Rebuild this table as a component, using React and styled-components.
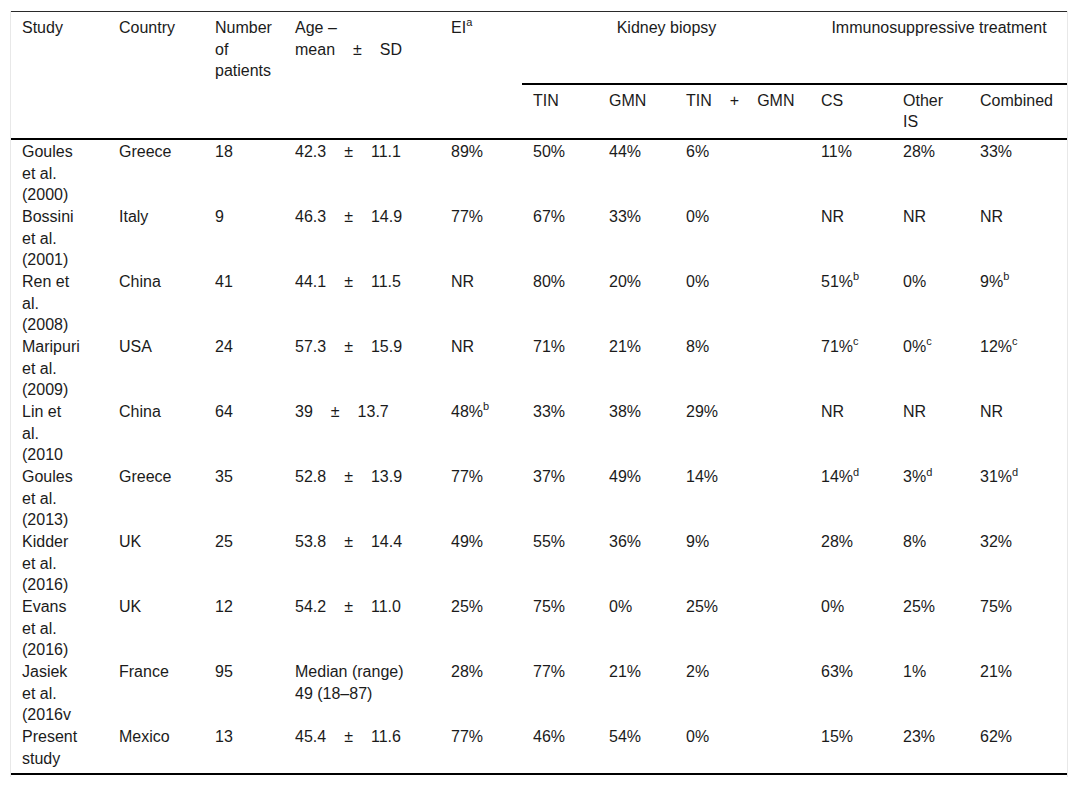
import React from "react";
import styled, { createGlobalStyle } from "styled-components";

const GlobalStyle = createGlobalStyle`
  html, body {
    margin: 0;
    padding: 0;
    background: #ffffff;
  }
  body {
    font-family: "Liberation Sans", Arial, sans-serif;
    color: #1b1b1b;
  }
`;

const Page = styled.div`
  padding: 11px 11px 10px 10px;
`;

const Frame = styled.div`
  border-left: 1px solid #e8e8e8;
  border-right: 1px solid #e8e8e8;
  padding-bottom: 2px;
`;

const Table = styled.table`
  width: 100%;
  table-layout: fixed;
  border-collapse: separate;
  border-spacing: 0;
  font-size: 16px;
  line-height: 21.67px;
  border-top: 1px solid #2a2a2a;
  border-bottom: 2px solid #000;
`;

const Col = styled.col`
  width: ${(p) => p.$w}px;
`;

const Th = styled.th`
  font-weight: normal;
  text-align: left;
  vertical-align: top;
  padding: 5px 10px ${(p) => (p.$sub ? 5 : 4)}px 11px;
  border-bottom: ${(p) => (p.$ruled ? "2px solid #000" : "none")};
`;

const GroupTh = styled(Th)`
  text-align: center;
  padding-bottom: 44px;
  border-bottom: 2px solid #000;
`;

const Td = styled.td`
  vertical-align: top;
  padding: ${(p) => (p.$first ? 1 : 0)}px ${(p) => (p.$study ? 27 : 10)}px
    ${(p) => (p.$last ? 3 : 0)}px 11px;
`;

const Sup = styled.sup`
  font-size: 11px;
  line-height: 0;
  vertical-align: baseline;
  position: relative;
  top: -0.6em;
`;

const Sep = styled.span`
  margin: 0 18px;
`;

const Value = ({ v }) =>
  Array.isArray(v) ? (
    <>
      {v[0]}
      <Sup>{v[1]}</Sup>
    </>
  ) : (
    v
  );

const MeanSd = ({ m, sd }) => (
  <>
    {m}
    <Sep>±</Sep>
    {sd}
  </>
);

const widths = [97, 96, 80, 156, 82, 76, 77, 135, 82, 77, 98];

const rows = [
  { study: "Goules et al. (2000)", country: "Greece", n: "18", age: ["42.3", "11.1"], ei: "89%", k: ["50%", "44%", "6%"], t: ["11%", "28%", "33%"] },
  { study: "Bossini et al. (2001)", country: "Italy", n: "9", age: ["46.3", "14.9"], ei: "77%", k: ["67%", "33%", "0%"], t: ["NR", "NR", "NR"] },
  { study: "Ren et al. (2008)", country: "China", n: "41", age: ["44.1", "11.5"], ei: "NR", k: ["80%", "20%", "0%"], t: [["51%", "b"], "0%", ["9%", "b"]] },
  { study: "Maripuri et al. (2009)", country: "USA", n: "24", age: ["57.3", "15.9"], ei: "NR", k: ["71%", "21%", "8%"], t: [["71%", "c"], ["0%", "c"], ["12%", "c"]] },
  { study: "Lin et al. (2010", country: "China", n: "64", age: ["39", "13.7"], ei: ["48%", "b"], k: ["33%", "38%", "29%"], t: ["NR", "NR", "NR"] },
  { study: "Goules et al. (2013)", country: "Greece", n: "35", age: ["52.8", "13.9"], ei: "77%", k: ["37%", "49%", "14%"], t: [["14%", "d"], ["3%", "d"], ["31%", "d"]] },
  { study: "Kidder et al. (2016)", country: "UK", n: "25", age: ["53.8", "14.4"], ei: "49%", k: ["55%", "36%", "9%"], t: ["28%", "8%", "32%"] },
  { study: "Evans et al. (2016)", country: "UK", n: "12", age: ["54.2", "11.0"], ei: "25%", k: ["75%", "0%", "25%"], t: ["0%", "25%", "75%"] },
  { study: "Jasiek et al. (2016v", country: "France", n: "95", age: null, ei: "28%", k: ["77%", "21%", "2%"], t: ["63%", "1%", "21%"] },
  { study: "Present study", country: "Mexico", n: "13", age: ["45.4", "11.6"], ei: "77%", k: ["46%", "54%", "0%"], t: ["15%", "23%", "62%"] },
];

export default function App() {
  return (
    <>
      <GlobalStyle />
      <Page>
        <Frame>
          <Table>
            <colgroup>
              {widths.map((w, i) => (
                <Col key={i} $w={w} />
              ))}
            </colgroup>
            <thead>
              <tr>
                <Th rowSpan={2} $ruled>Study</Th>
                <Th rowSpan={2} $ruled>Country</Th>
                <Th rowSpan={2} $ruled>Number of patients</Th>
                <Th rowSpan={2} $ruled>
                  Age –<br />
                  mean<Sep>±</Sep>SD
                </Th>
                <Th rowSpan={2} $ruled>
                  EI<Sup>a</Sup>
                </Th>
                <GroupTh colSpan={3}>Kidney biopsy</GroupTh>
                <GroupTh colSpan={3}>Immunosuppressive treatment</GroupTh>
              </tr>
              <tr>
                <Th $ruled $sub>TIN</Th>
                <Th $ruled $sub>GMN</Th>
                <Th $ruled $sub>
                  TIN<Sep>+</Sep>GMN
                </Th>
                <Th $ruled $sub>CS</Th>
                <Th $ruled $sub>Other IS</Th>
                <Th $ruled $sub>Combined</Th>
              </tr>
            </thead>
            <tbody>
              {rows.map((r, i) => {
                const first = i === 0;
                const last = i === rows.length - 1;
                const cell = { $first: first, $last: last };
                return (
                  <tr key={i}>
                    <Td $study {...cell}>{r.study}</Td>
                    <Td {...cell}>{r.country}</Td>
                    <Td {...cell}>{r.n}</Td>
                    <Td {...cell}>
                      {r.age ? (
                        <MeanSd m={r.age[0]} sd={r.age[1]} />
                      ) : (
                        <>
                          Median (range)
                          <br />
                          49 (18–87)
                        </>
                      )}
                    </Td>
                    <Td {...cell}>
                      <Value v={r.ei} />
                    </Td>
                    {r.k.map((v, j) => (
                      <Td key={"k" + j} {...cell}>
                        <Value v={v} />
                      </Td>
                    ))}
                    {r.t.map((v, j) => (
                      <Td key={"t" + j} {...cell}>
                        <Value v={v} />
                      </Td>
                    ))}
                  </tr>
                );
              })}
            </tbody>
          </Table>
        </Frame>
      </Page>
    </>
  );
}
